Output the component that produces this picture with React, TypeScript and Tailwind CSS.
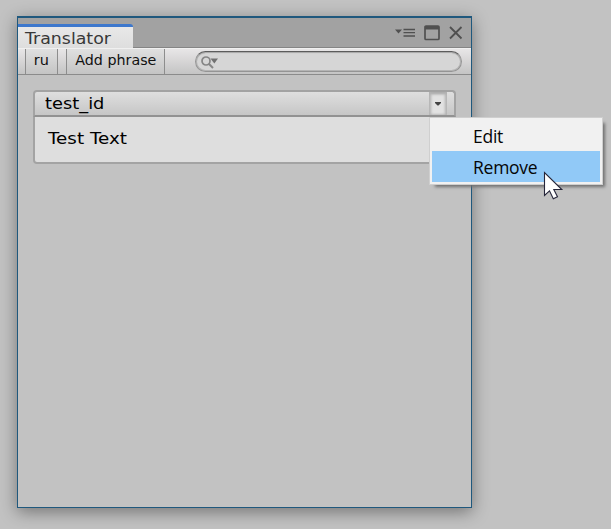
function TitleBar() {
  return (
    <div className="flex h-[30px] shrink-0 items-end border-b border-[#858585] bg-[#a2a2a2]">
      <div className="-mb-px h-[24px] w-[115px] rounded-tr-[3px] border-t-[3px] border-[#3d78cd] bg-linear-to-b from-[#e8e8e8] to-[#dedede] pl-[7px] text-[16px] leading-[24px] text-[#383838]">
        <span className="inline-block origin-left scale-x-[1.085]">Translator</span>
      </div>
      <div className="mb-[5px] ml-auto flex items-center pr-[6px] text-[#505050]">
        <svg width="70" height="18" viewBox="0 0 70 18" fill="none">
          <path d="M0 5.500h7L3.500 9.500z" fill="#505050" />
          <path d="M8.500 5.500h11.500M8.500 8.700h11.500M8.500 12h11.500" stroke="#505050" strokeWidth="1.300" />
          <rect x="30" y="2" width="14" height="13.500" rx="1" stroke="#505050" strokeWidth="1.700" />
          <path d="M30 2h14v3.500H30z" fill="#505050" />
          <path d="M55 3l11.500 11.500M66.500 3L55 14.500" stroke="#505050" strokeWidth="1.800" />
        </svg>
      </div>
    </div>
  );
}

function Toolbar() {
  return (
    <div className="flex h-[27px] shrink-0 border-t border-b border-t-[#f0f0f0] border-b-[#8b8b8b] bg-linear-to-b from-[#e8e6e7] to-[#c4c4c4] text-[14px] leading-[23px] text-[#111]">
      <div className="ml-[7px] w-[33px] border-x border-[#8d8d8d] bg-linear-to-b from-[#e0e0e0] to-[#c4c4c4] text-center">
        <span className="inline-block scale-x-[1.03]">ru</span>
      </div>
      <div className="ml-[8px] w-[99px] border-x border-[#8d8d8d] bg-linear-to-b from-[#e0e0e0] to-[#c4c4c4] text-center whitespace-nowrap">
        <span className="inline-block scale-x-[1.02]">Add phrase</span>
      </div>
      <div className="mt-[2px] ml-[30px] flex h-[21px] w-[267px] items-center rounded-full border border-[#949494] border-t-[#5c5c5c] bg-[#d6d6d6] pl-[5px] shadow-[inset_0_1px_1px_#aaa,inset_0_0_0_1px_#b4b4b4]">
        <svg width="18" height="14" viewBox="0 0 18 14" fill="none">
          <circle cx="5" cy="6" r="4" stroke="#858585" strokeWidth="1.700" />
          <path d="M8 9l4 4" stroke="#858585" strokeWidth="2" />
          <path d="M9.500 3.500h7.500l-3.700 5z" fill="#707070" />
        </svg>
      </div>
    </div>
  );
}

function PhraseCard() {
  return (
    <div className="mt-[15px] ml-[15px] w-[423px] text-[16.500px] text-black">
      <div className="flex h-[27px] rounded-t-[4px] border-2 border-[#a3a3a3] border-b-[#929292] bg-linear-to-b from-[#dfdfdf] to-[#c6c6c6] pl-[10px] leading-[24px]">
        <span className="inline-block origin-left scale-x-[1.08]">test_id</span>
        <div className="ml-auto flex w-[18px] justify-center bg-[#e2e2e2] pt-[9.500px] shadow-[inset_2px_0_3px_#b4b4b4,inset_-2px_0_3px_#b4b4b4,inset_0_2px_3px_#a0a0a0]">
          <svg width="6" height="4" viewBox="0 0 6 4">
            <path d="M0 0h6v1L3.500 3.500h-1L0 1z" fill="#444" />
          </svg>
        </div>
        <div className="w-[7px]" />
      </div>
      <div className="h-[47px] rounded-b-[4px] border-2 border-t-0 border-[#a3a3a3] bg-[#dedede] pl-[13px] leading-[43px]">
        <span className="inline-block origin-left scale-x-[1.11]">Test Text</span>
      </div>
    </div>
  );
}

function ContextMenu() {
  return (
    <div className="absolute top-[117px] left-[429px] h-[68px] w-[174px] border border-[#cfcfcf] bg-[#f1f1f1] p-[2px] font-['Open_Sans','Noto_Sans',sans-serif] text-[17.500px] text-[#050505] shadow-[4px_4px_3px_-2px_#707070]">
      <div className="h-[31px] pl-[41px] leading-[33px] tracking-[-0.25px]">Edit</div>
      <div className="h-[31px] w-[168px] bg-[#91c9f7] pl-[41px] leading-[33px] tracking-[-0.25px]">Remove</div>
    </div>
  );
}

export default function App() {
  return (
    <div className="relative h-[529px] w-[611px] overflow-hidden bg-[#c2c2c2] pt-[16px] pl-[17px] font-['DejaVu_Sans',Verdana,sans-serif]">
      <div className="flex h-[492px] w-[455px] flex-col border border-t-2 border-[#1f587d] bg-[#c2c2c2] shadow-[0_4px_16px_rgba(0,0,0,0.4)]">
        <TitleBar />
        <Toolbar />
        <PhraseCard />
      </div>
      <ContextMenu />
      <svg className="absolute top-[171px] left-[543px]" width="21" height="30" viewBox="0 0 21 30">
        <path d="M1.500 1.500v23l5-4.700 3.800 8 4.200-2-3.700-7.300h8z" fill="#fff" stroke="#26263a" strokeWidth="1.100" />
      </svg>
    </div>
  );
}
